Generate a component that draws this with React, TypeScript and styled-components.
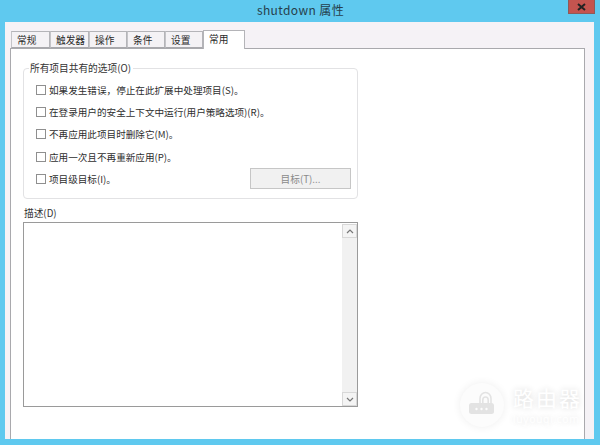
import React from "react";
import styled, { createGlobalStyle } from "styled-components";

const Global = createGlobalStyle`
  html, body { margin: 0; padding: 0; }
  body { font-family: "Noto Sans CJK SC", "Noto Sans", sans-serif; }
`;

const Win = styled.div`
  position: relative;
  width: 600px;
  height: 445px;
  box-sizing: border-box;
  background: #5fc9ef;
  padding: 0 6px 6px 5px;
  display: flex;
  flex-direction: column;
  overflow: hidden;
`;
const TitleBar = styled.div`
  height: 22px;
  flex: none;
  display: flex;
  align-items: center;
  justify-content: center;
  padding-left: 2px;
  font-size: 12px;
  letter-spacing: 0.4px;
  color: #26404c;
  line-height: 18px;
  padding-bottom: 2px;
  box-sizing: border-box;
`;
const CloseBtn = styled.div`
  position: absolute;
  top: 0;
  right: 5px;
  width: 27px;
  height: 14px;
  box-sizing: border-box;
  background: #c4544f;
  border: 1px solid #8e5a58;
  border-top: none;
  display: flex;
  align-items: center;
  justify-content: center;
`;
const Body = styled.div`
  flex: 1;
  min-height: 0;
  background: #f5f2f6;
  padding: 7px 9px 0 5px;
  display: flex;
  flex-direction: column;
`;
const TabRow = styled.div`
  display: flex;
  height: 19px;
  flex: none;
  padding-left: 1px;
  align-items: flex-end;
  position: relative;
  z-index: 1;
`;
const Tab = styled.div<{ $w: number; $active?: boolean }>`
  width: ${(p) => p.$w}px;
  height: ${(p) => (p.$active ? 19 : 17)}px;
  margin-bottom: ${(p) => (p.$active ? -1 : 0)}px;
  box-sizing: border-box;
  border: 1px solid #b4b4b8;
  border-left: ${(p) => (p.$active ? "1px solid #b4b4b8" : "1px solid #c4c4c8")};
  border-bottom: ${(p) => (p.$active ? "none" : "1px solid #a8a8ac")};
  background: ${(p) => (p.$active ? "#fff" : "#f4f2f5")};
  font-size: 9.7px;
  line-height: 17px;
  padding-left: 5px;
  color: #2a2a2a;
  white-space: nowrap;
`;
const Panel = styled.div`
  flex: 1;
  min-height: 0;
  background: #fff;
  border: 1px solid #a9a9ad;
  border-bottom: none;
  padding: 19px 12px 0 12px;
  display: flex;
  flex-direction: column;
  align-items: flex-start;
`;
const Group = styled.div`
  position: relative;
  width: 335px;
  height: 131px;
  flex: none;
  box-sizing: border-box;
  border: 1px solid #e2e2e4;
  border-radius: 4px;
  padding: 10px 6px 0 12px;
  display: flex;
  flex-direction: column;
`;
const Legend = styled.div`
  position: absolute;
  left: 5px;
  top: -8px;
  background: #fff;
  padding: 0 2px 0 1px;
  font-size: 9.7px;
  line-height: 15px;
  color: #333;
`;
const Row = styled.div`
  height: 22.2px;
  display: flex;
  align-items: center;
  gap: 3px;
  font-size: 9.6px;
  color: #2e2e2e;
  white-space: nowrap;
`;
const Check = styled.span`
  width: 10px;
  height: 10px;
  flex: none;
  box-sizing: border-box;
  border: 1px solid #8f8f8f;
  background: #fff;
`;
const LastRow = styled(Row)`
  justify-content: space-between;
`;
const RowLabel = styled.span`
  display: flex;
  align-items: center;
  gap: 3px;
`;
const TargetBtn = styled.div`
  width: 101px;
  height: 21px;
  box-sizing: border-box;
  border: 1px solid #c6c6c6;
  background: #f1f1f1;
  color: #8a8a8a;
  font-size: 9.7px;
  display: flex;
  align-items: center;
  justify-content: center;
`;
const DescLabel = styled.div`
  font-size: 9.7px;
  line-height: 14px;
  color: #333;
  margin-top: 7px;
  margin-left: 1px;
  height: 16px;
`;
const TextBox = styled.div`
  width: 335px;
  height: 185px;
  flex: none;
  box-sizing: border-box;
  border: 1px solid #9a9a9a;
  display: flex;
  justify-content: flex-end;
  background: #fff;
`;
const Scroll = styled.div`
  width: 15px;
  margin: 1px 0 0;
  background: #f1f1f1;
  display: flex;
  flex-direction: column;
  justify-content: space-between;
`;
const ScrollBtn = styled.div`
  height: 14px;
  box-sizing: border-box;
  background: #f4f4f4;
  border: 1px solid #d8d8d8;
  display: flex;
  align-items: center;
  justify-content: center;
`;
const Mark = styled.div`
  position: absolute;
  left: 460px;
  top: 383px;
  display: flex;
  align-items: flex-start;
  gap: 9px;
`;
const MarkCircle = styled.div`
  width: 44px;
  height: 44px;
  border-radius: 50%;
  background: #fcfcfc;
  box-shadow: 0 0 9px rgba(0, 0, 0, 0.07);
  display: flex;
  align-items: center;
  justify-content: center;
`;
const MarkText = styled.div`
  display: flex;
  flex-direction: column;
  align-items: flex-start;
  color: #fff;
  text-shadow: 0 0 6px rgba(0, 0, 0, 0.16);
`;
const MarkCn = styled.div`
  font-size: 21px;
  line-height: 28px;
  height: 30px;
  letter-spacing: 2px;
`;
const MarkEn = styled.div`
  font-size: 10.5px;
  line-height: 13px;
  letter-spacing: 0.6px;
  font-family: "Open Sans", sans-serif;
`;

const tabs: [string, number][] = [
  ["常规", 39],
  ["触发器", 39],
  ["操作", 38],
  ["条件", 38],
  ["设置", 38],
];
const rows = [
  "如果发生错误，停止在此扩展中处理项目(S)。",
  "在登录用户的安全上下文中运行(用户策略选项)(R)。",
  "不再应用此项目时删除它(M)。",
  "应用一次且不再重新应用(P)。",
];

export default function App() {
  return (
    <Win>
      <Global />
      <TitleBar>shutdown 属性</TitleBar>
      <CloseBtn>
        <svg width="9" height="8" viewBox="0 0 9 8">
          <path d="M1 1L8 7M8 1L1 7" stroke="#222" strokeWidth="2" />
        </svg>
      </CloseBtn>
      <Body>
        <TabRow>
          {tabs.map(([t, w]) => (
            <Tab key={t} $w={w}>{t}</Tab>
          ))}
          <Tab $w={42} $active>常用</Tab>
        </TabRow>
        <Panel>
          <Group>
            <Legend>所有项目共有的选项(O)</Legend>
            {rows.map((r) => (
              <Row key={r}>
                <Check />
                {r}
              </Row>
            ))}
            <LastRow>
              <RowLabel>
                <Check />
                项目级目标(I)。
              </RowLabel>
              <TargetBtn>目标(T)...</TargetBtn>
            </LastRow>
          </Group>
          <DescLabel>描述(D)</DescLabel>
          <TextBox>
            <Scroll>
              <ScrollBtn>
                <svg width="8" height="5" viewBox="0 0 8 5">
                  <path d="M1 4L4 1L7 4" stroke="#777" strokeWidth="1.2" fill="none" />
                </svg>
              </ScrollBtn>
              <ScrollBtn>
                <svg width="8" height="5" viewBox="0 0 8 5">
                  <path d="M1 1L4 4L7 1" stroke="#777" strokeWidth="1.2" fill="none" />
                </svg>
              </ScrollBtn>
            </Scroll>
          </TextBox>
        </Panel>
      </Body>
      <Mark>
        <MarkCircle>
          <svg width="28" height="28" viewBox="0 0 28 28">
            <path d="M12 12V7.5a5.5 6 0 0 1 11 0V12M14.8 12V9a2.7 3 0 0 1 5.4 0V12" stroke="#e3e3e3" strokeWidth="1.6" fill="none" />
            <rect x="1" y="12" width="25" height="11" rx="2.5" fill="#e3e3e3" />
            <circle cx="8.5" cy="18" r="1.2" fill="#fcfcfc" />
            <circle cx="13.5" cy="18" r="1.2" fill="#fcfcfc" />
            <circle cx="18.5" cy="18" r="1.2" fill="#fcfcfc" />
          </svg>
        </MarkCircle>
        <MarkText>
          <MarkCn>路由器</MarkCn>
          <MarkEn>luyouqi.com</MarkEn>
        </MarkText>
      </Mark>
    </Win>
  );
}
